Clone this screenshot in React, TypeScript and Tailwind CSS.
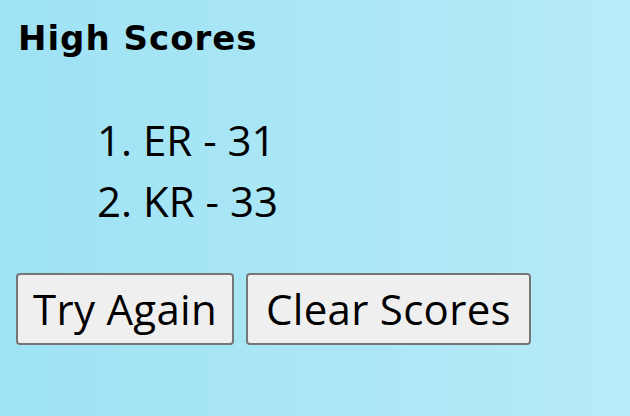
import React from "react";

export default function App() {
  return (
    <div className="w-full h-[416px] overflow-hidden bg-gradient-to-r from-[#9ee2f4] to-[#b7ebf8] text-black font-['Open_Sans',sans-serif]">
      <div className="pl-[18px] pt-[18px]">
        <h2 className="text-[34px] leading-[40px] font-bold tracking-[1px] font-['DejaVu_Sans',sans-serif]">High Scores</h2>
        <ol className="mt-[51px] pl-[79px] text-[42px] leading-[61px]">
          <li>1. ER - 31</li>
          <li>2. KR - 33</li>
        </ol>
        <div className="mt-[42px] -ml-[2px] flex gap-[12px]">
          <button className="h-[72px] px-[15px] bg-[#efefef] border-2 border-[#767676] rounded-[4px] text-[42px] leading-none tracking-[0.3px]">
            Try Again
          </button>
          <button className="h-[72px] px-[18px] bg-[#efefef] border-2 border-[#767676] rounded-[4px] text-[42px] leading-none tracking-[0.3px]">
            Clear Scores
          </button>
        </div>
      </div>
    </div>
  );
}
